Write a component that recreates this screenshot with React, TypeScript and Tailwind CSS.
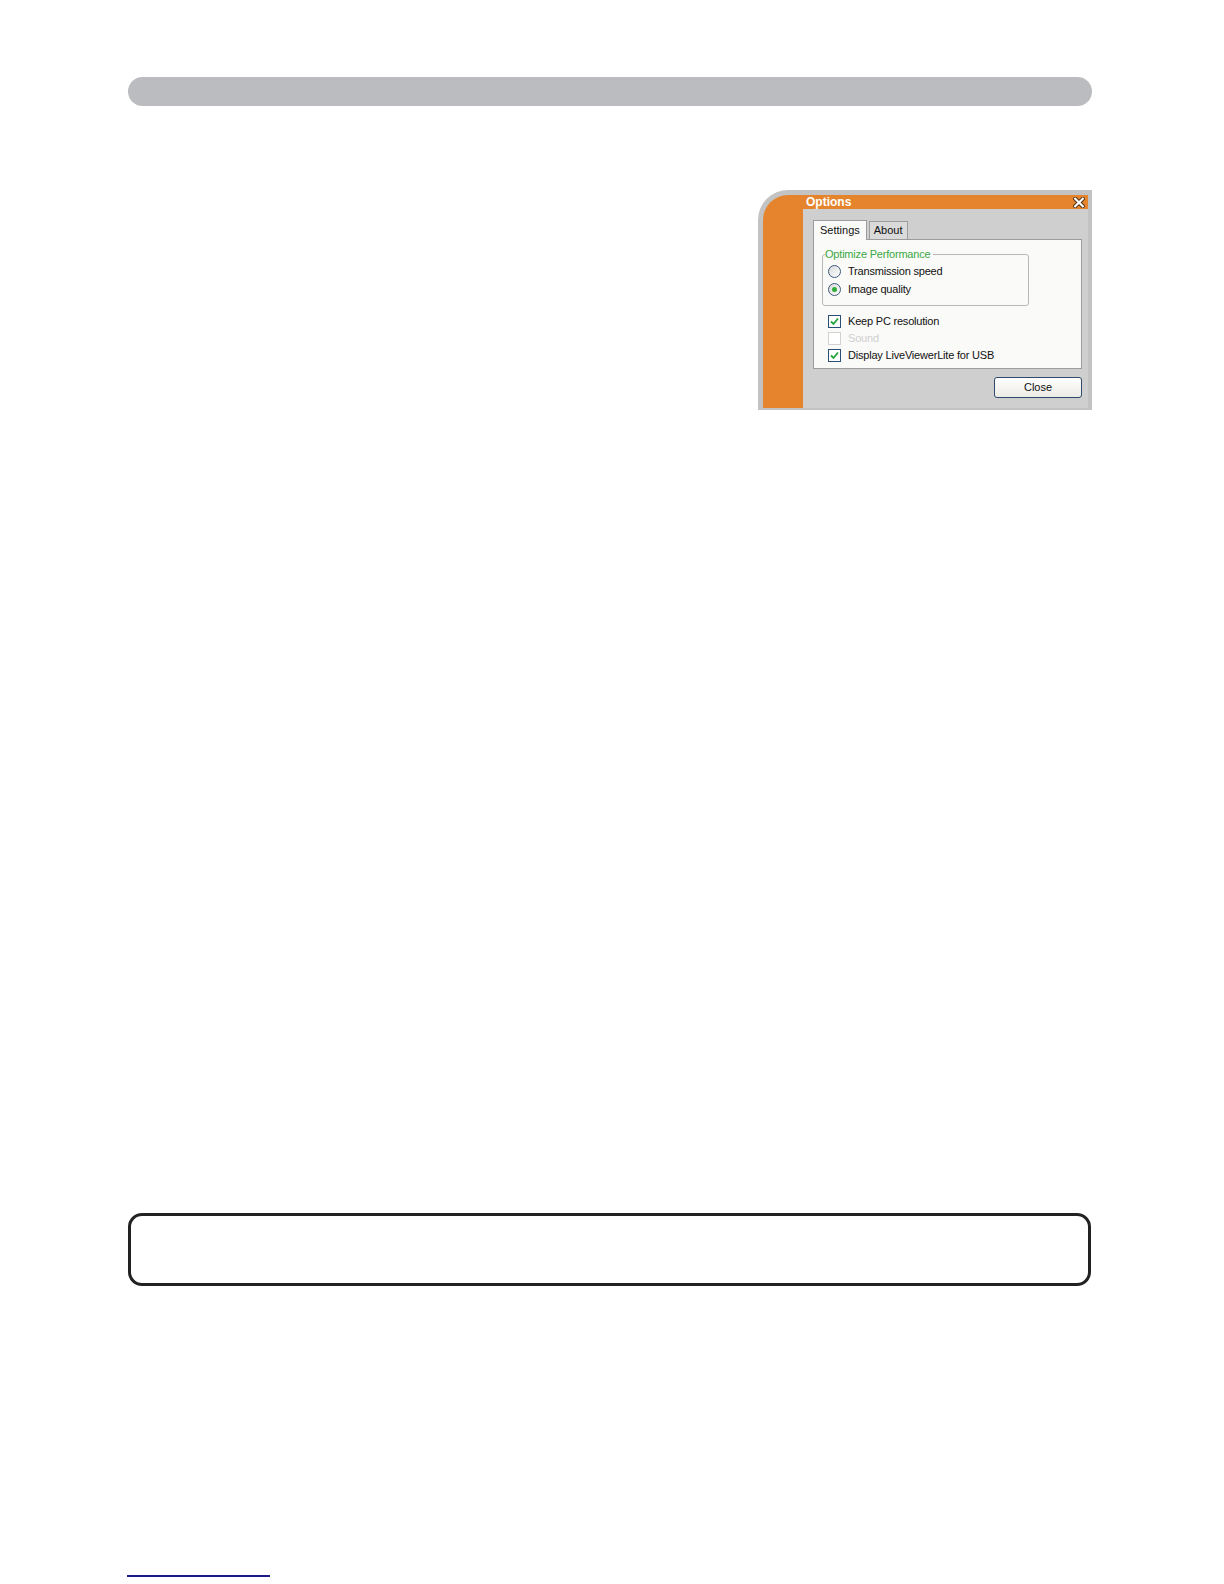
import React from 'react';

// Options dialog (screenshot of LiveViewer settings) placed in a manual page layout

const uiFont = { fontFamily: '"Liberation Sans", Arial, sans-serif' };

function CloseGlyph() {
  return (
    <svg width="12" height="11" viewBox="0 0 12 11">
      <path d="M2.2 1.8 L9.8 9.2 M9.8 1.8 L2.2 9.2" stroke="#4a3018" strokeWidth="4" strokeLinecap="square" />
      <path d="M2.2 1.8 L9.8 9.2 M9.8 1.8 L2.2 9.2" stroke="#ffffff" strokeWidth="2.2" strokeLinecap="square" />
    </svg>
  );
}

function Radio({ checked, label }: { checked?: boolean; label: string }) {
  return (
    <div className="flex items-center h-[18px]">
      <span className="w-[13px] h-[13px] rounded-full border border-[#3d5a7a] bg-gradient-to-br from-[#d8d8d8] to-[#ffffff] flex items-center justify-center">
        {checked && <span className="w-[5px] h-[5px] rounded-full bg-[#2fae3a]" />}
      </span>
      <span className="ml-[7px] text-[11px] tracking-[-0.2px] text-[#111]">{label}</span>
    </div>
  );
}

function Check({ checked, disabled, label }: { checked?: boolean; disabled?: boolean; label: string }) {
  return (
    <div className="flex items-center h-[17px]">
      <span
        className={`w-[13px] h-[13px] border flex items-center justify-center bg-white ${
          disabled ? 'border-[#d2d2d2]' : 'border-[#2b4f74]'
        }`}
      >
        {checked && (
          <svg width="9" height="9" viewBox="0 0 9 9">
            <path d="M1 4.5 L3.5 7 L8 1.5" stroke="#23a33a" strokeWidth="1.8" fill="none" />
          </svg>
        )}
      </span>
      <span
        className={`ml-[7px] text-[11px] tracking-[-0.2px] ${disabled ? 'text-[#d0d0d0]' : 'text-[#111]'}`}
      >
        {label}
      </span>
    </div>
  );
}

function OptionsDialog() {
  return (
    <div
      className="w-[334px] h-[220px] bg-[#c3c3c3] rounded-tl-[30px] pl-[5px] pt-[5px] pr-[4px] pb-[2px]"
      style={uiFont}
    >
      <div className="h-full bg-[#e5842c] rounded-tl-[25px] flex flex-col">
        {/* title bar */}
        <div className="h-[14px] flex items-center justify-between pl-[43px] pr-[3px]">
          <span className="text-[12px] font-bold text-white leading-none">Options</span>
          <CloseGlyph />
        </div>
        {/* body */}
        <div className="flex-1 ml-[40px] bg-[#cfcfcf] pt-[10px] pl-[10px] pr-[6px]">
          <div className="flex items-end h-[20px]">
            <div className="h-[20px] px-[6px] bg-[#fafaf8] border border-b-0 border-[#9c9c9c] text-[11px] text-[#111] flex items-center relative top-[1px] z-10">
              Settings
            </div>
            <div className="h-[18px] ml-[2px] px-[4px] bg-[#dadada] border border-b-0 border-[#9c9c9c] text-[11px] text-[#111] flex items-end pb-[1px]">
              About
            </div>
          </div>
          <div className="h-[130px] bg-[#fafaf8] border border-[#9c9c9c] pt-[14px] pl-[8px]">
            <div className="relative w-[207px] h-[52px] border border-[#b8b8b8] rounded-[3px]">
              <span className="absolute -top-[8px] left-[2px] bg-[#fafaf8] pr-[3px] text-[11px] tracking-[-0.2px] leading-[14px] text-[#3aa845]">
                Optimize Performance
              </span>
              <div className="pt-[7px] pl-[5px]">
                <Radio label="Transmission speed" />
                <Radio checked label="Image quality" />
              </div>
            </div>
            <div className="mt-[7px] pl-[6px]">
              <Check checked label="Keep PC resolution" />
              <Check disabled label="Sound" />
              <Check checked label="Display LiveViewerLite for USB" />
            </div>
          </div>
          <div className="flex justify-end mt-[8px]">
            <button className="w-[88px] h-[21px] rounded-[3px] border border-[#2f4a6a] bg-gradient-to-b from-white to-[#ecebe6] text-[11px] text-[#111]">
              Close
            </button>
          </div>
        </div>
      </div>
    </div>
  );
}

export default function App() {
  return (
    <div className="w-[1224px] h-[1584px] bg-white">
      <div className="pt-[77px] pl-[128px] w-[1092px]">
        <div className="h-[29px] rounded-full bg-[#bbbcbf]" />
        <div className="mt-[84px] flex justify-end">
          <OptionsDialog />
        </div>
        <div className="mt-[803px] w-[963px] h-[73px] border-[3px] border-[#222] rounded-[14px]" />
        <div className="mt-[289px] -ml-[1px] w-[143px] h-[2px] bg-[#1b1b8a]" />
      </div>
    </div>
  );
}
